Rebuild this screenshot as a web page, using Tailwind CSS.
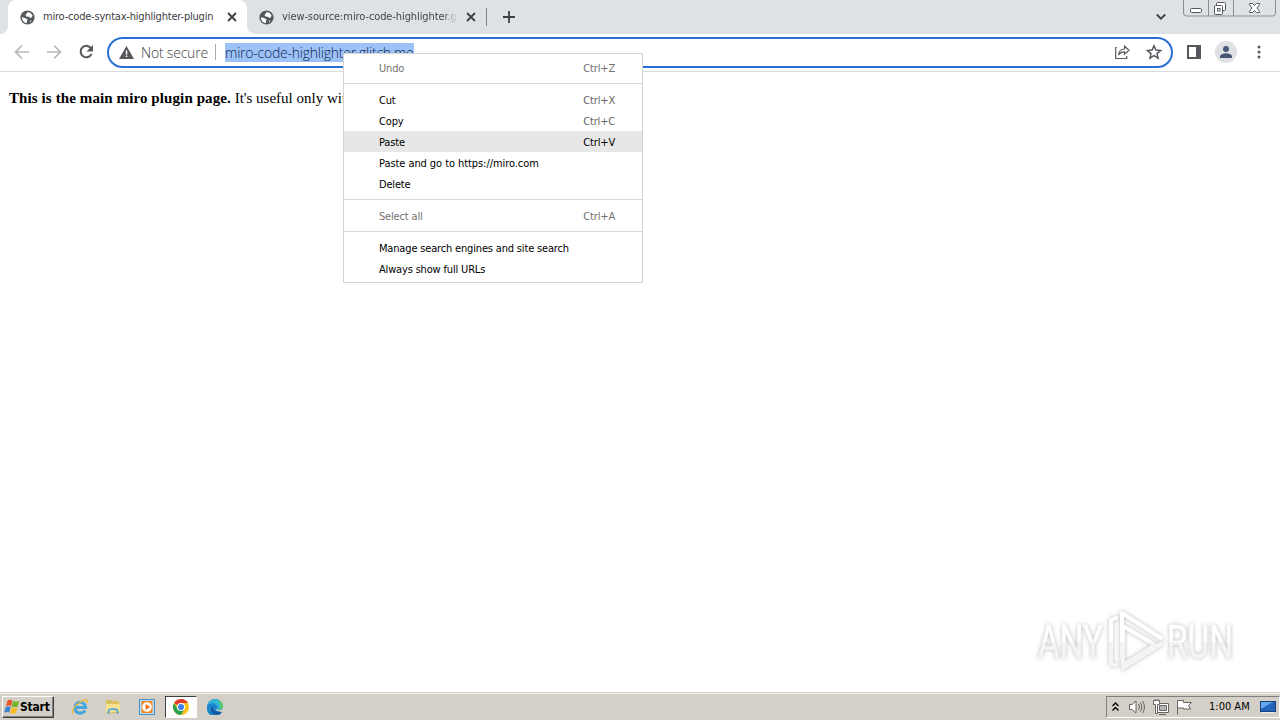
<!DOCTYPE html>
<html lang="en">
<head>
  <meta charset="UTF-8" />
  <meta name="viewport" content="width=device-width, initial-scale=1" />
  <title>miro-code-syntax-highlighter-plugin</title>
  <script src="https://cdn.jsdelivr.net/npm/@tailwindcss/browser@4"></script>
</head>
<body class="relative flex h-[720px] w-[1280px] flex-col overflow-hidden bg-white font-['DejaVu_Sans_Condensed','DejaVu_Sans',sans-serif] text-black">
  <svg class="hidden">
    <symbol id="globe" viewBox="0 0 24 24">
      <circle cx="12" cy="12" r="10" fill="#54585d" />
      <path fill="#fff" d="M4.200 11.500l4.300 1.300c1 .3 1.200 1 2.500 1.400 1.500.4 1.300 1.500.3 2.500l-.3 3c-4 0-7-4-6.800-8.200zM10 7.500l2-3c4-.2 6 2 7.300 5l-2 3c-2 .3-2.300-.5-3.300-1.500l-3.500-.5c-1.300-.8-1.500-2-.5-3zM15 17l3-.8-2 2.500z" />
    </symbol>
  </svg>

  <!-- Tab strip -->
  <header class="flex h-[34px] shrink-0 bg-[#dee1e6]">
    <div class="flex w-2 items-end bg-white"><div class="h-full w-2 rounded-br-lg bg-[#dee1e6]"></div></div>
    <div class="bg-[#dee1e6]">
      <div class="flex h-full w-[239px] items-center rounded-t-lg bg-white pl-[11px]">
        <svg class="h-[17px] w-[17px]"><use href="#globe" /></svg>
        <span class="ml-[7px] w-[180px] text-[11px] tracking-[-0.2px] whitespace-nowrap text-[#3c4043]">miro-code-syntax-highlighter-plugin</span>
        <svg class="ml-1 h-2.5 w-2.5" viewBox="0 0 10 10" stroke="#3c4043" stroke-width="1.800"><path d="M1 1l8 8M9 1l-8 8" /></svg>
      </div>
    </div>
    <div class="w-[239px] bg-white">
      <div class="flex h-full items-center rounded-bl-lg bg-[#dee1e6] pl-[11px]">
        <svg class="h-[17px] w-[17px]"><use href="#globe" /></svg>
        <span class="ml-[7px] w-[175px] overflow-hidden bg-linear-to-r from-[#3c4043] from-92% to-transparent bg-clip-text text-[11px] tracking-[-0.1px] whitespace-nowrap text-transparent">view-source:miro-code-highlighter.gl</span>
        <svg class="ml-[9px] h-2.5 w-2.5" viewBox="0 0 10 10" stroke="#3c4043" stroke-width="1.800"><path d="M1 1l8 8M9 1l-8 8" /></svg>
      </div>
    </div>
    <div class="mt-2 h-[18px] w-px bg-[#80858b]"></div>
    <svg class="mt-[11px] ml-4 h-3 w-3" viewBox="0 0 12 12" stroke="#3c4043" stroke-width="1.800"><path d="M6 0v12M0 6h12" /></svg>
    <svg class="mt-[13px] ml-auto h-2 w-[10px]" viewBox="0 0 10 8" fill="none" stroke="#3c4043" stroke-width="1.800"><path d="M.8 1.500L5 5.700l4.200-4.200" /></svg>
    <svg class="mr-[3px] ml-4 h-[18px] w-[95px]" viewBox="0 0 95 18" fill="none" stroke="#8b8f95">
      <path d="M1.500 0v13q0 3 3 3h86q3 0 3-3V0M26.500 0v16M51.500 0v16" />
      <g stroke="#55595e" fill="#fff"><rect x="8.500" y="8.500" width="11" height="4" rx="1" /><rect x="34.500" y="2.500" width="9" height="8" rx="1" /><rect x="32.500" y="5.500" width="8" height="9" rx="1" /><rect x="35.500" y="8.500" width="2.500" height="2.500" /></g>
      <path stroke="#55595e" fill="#fff" d="M67.500 3.500h3l2 2 2-2h3v1L75 8l2.500 3.500v1h-3l-2-2-2 2h-3v-1L70 8l-2.500-3.500z" />
    </svg>
  </header>

  <!-- Toolbar -->
  <nav class="flex h-[38px] shrink-0 items-center border-b border-[#d9dbde] pb-px">
    <svg class="ml-[14px] h-4 w-[81px]" viewBox="0 0 81 16" fill="none" stroke="#b5b7b9" stroke-width="1.700">
      <path d="M15 8H2M8 1.500L1.500 8 8 14.500M33 8h13M40 1.500L46.500 8 40 14.500" />
      <path stroke="#54585d" stroke-width="2" d="M77.300 4.700A5.700 5.700 0 1 0 77.600 9.800" /><path fill="#54585d" stroke="none" d="M79 1v6.500h-6.500z" />
    </svg>
    <div class="ml-3 flex h-[31px] w-[1066px] items-center rounded-full border-2 border-[#2a6fd6] pl-2.5 font-['Open_Sans','Noto_Sans',sans-serif] font-light">
      <svg class="h-[13px] w-[15px]" viewBox="0 0 15 13"><path fill="#54585d" d="M7.500 0L15 13H0z" /><path fill="#fff" d="M6.800 4.500h1.500v4H6.800zM6.800 9.600h1.500v1.500H6.800z" /></svg>
      <span class="ml-[7px] w-[74px] text-[14px] tracking-[-0.2px] whitespace-nowrap text-[#3c4043]">Not secure</span>
      <span class="h-4 w-px bg-[#a5a8ac]"></span>
      <span class="ml-[9px] h-[19px] w-[189px] bg-[#9dc2f8] text-[14px] leading-[19px] tracking-[-0.23px] whitespace-nowrap text-[#10284d]">miro-code-highlighter.glitch.me</span>
      <svg class="mr-[7px] ml-auto h-4 w-[50px]" viewBox="0 0 50 16" fill="none" stroke="#54585d" stroke-width="1.200">
        <path d="M2.700 3.500H1.700v11h11V12M4.500 11c.5-4.500 3-6 6-6V2.200l4.500 4-4.500 4V7.800c-2.500 0-4.500.9-6 3.200z" />
        <path stroke-width="1.500" d="M40 1.800l1.900 4.300 4.700.4-3.600 3.100 1.100 4.600-4.100-2.500-4.100 2.500L37 9.600l-3.600-3.100 4.700-.4z" />
      </svg>
    </div>
    <svg class="ml-[14px] h-[14px] w-[14px]" viewBox="0 0 14 14"><path fill="#54585d" fill-rule="evenodd" d="M0 0h14v14H0zM2 2v10h7V2z" /></svg>
    <svg class="ml-[14px] h-[22px] w-[22px]" viewBox="0 0 22 22"><circle cx="11" cy="11" r="11" fill="#dfe1e5" /><g fill="#4a5878"><circle cx="11" cy="8" r="3" /><path d="M5 17v-1.800c0-2 4-3 6-3s6 1 6 3V17z" /></g></svg>
    <svg class="ml-5 h-[14px] w-1" viewBox="0 0 4 14" fill="#54585d"><circle cx="2" cy="2" r="1.500" /><circle cx="2" cy="7" r="1.500" /><circle cx="2" cy="12" r="1.500" /></svg>
  </nav>

  <!-- Page -->
  <main class="flex-1 overflow-hidden pt-[17px] pl-[9px] font-['Liberation_Serif',serif] text-[15px] leading-[19px] whitespace-nowrap">
    <p><b class="tracking-[0.1px]">This is the main miro plugin page.</b> It's useful only with</p>
  </main>

  <!-- Watermark -->
  <div class="absolute top-[608px] left-[1036px] drop-shadow-[0_0_2px_#bbbbbb]">
    <svg class="h-[66px] w-[200px] overflow-visible" viewBox="0 0 200 66">
      <defs>
        <linearGradient id="mark" gradientUnits="userSpaceOnUse" x1="0" y1="12" x2="0" y2="52"><stop offset=".55" stop-color="#fff" /><stop offset=".56" stop-color="#f4f4f4" /></linearGradient>
      </defs>
      <g fill="url(#mark)" stroke="url(#mark)" stroke-width=".6" font-family="Roboto, sans-serif" font-size="46">
        <text x="2" y="50" textLength="65" lengthAdjust="spacingAndGlyphs">ANY</text>
        <text x="131" y="50" textLength="66" lengthAdjust="spacingAndGlyphs">RUN</text>
      </g>
      <g fill="none" stroke="url(#mark)" stroke-width="4" stroke-linejoin="round" stroke-linecap="round">
        <path d="M80 10l-5 2v44l5 1M86 50V5l39 25M87 18l32 19-32 20V18M125 36L87 60" />
      </g>
    </svg>
  </div>

  <!-- Taskbar -->
  <footer class="flex h-7 shrink-0 items-center border-t border-[#d4d0c8] bg-[#d4d0c8] pt-px text-[11px] shadow-[inset_0_1px_0_#f4f3f0]">
    <div class="ml-[2px] flex h-[22px] w-[52px] items-center border border-t-white border-r-[#404040] border-b-[#404040] border-l-white pl-px shadow-[inset_-1px_-1px_0_#808080]">
      <svg class="h-4 w-4" viewBox="0 0 16 16">
        <path fill="#e5572d" d="M3.500 1.500q2.500-1.500 5 0L7 7.200q-2.500-1.200-5 0z" /><path fill="#75b32c" d="M9.200 2q3 1.200 6 0L13.700 7.500q-3 1.200-6 0z" /><path fill="#3d83d3" d="M1.700 8q2.500-1.200 5 0l-1.500 5.500q-2.500-1.200-5 0z" /><path fill="#f8bd26" d="M7.500 8.300q3 1.200 6 0L12 14q-3 1.200-6 0z" />
      </svg>
      <b class="text-[12px] tracking-[-0.2px]">Start</b>
    </div>
    <svg class="ml-[17px] h-[18px] w-[18px]" viewBox="0 0 18 18" fill="none">
      <path stroke="#42a7df" stroke-width="3" d="M4 9.500h10.500C14 2.500 4 2.500 4 10c0 6 7.500 6.500 10 2.500" /><path stroke="#e8b83c" stroke-width="1.300" d="M2 16C-.5 13 6 4 14 2c3-.5 3 1 2 3" />
    </svg>
    <svg class="ml-4 h-4 w-4" viewBox="0 0 16 16">
      <path fill="#e3c159" d="M1 1h5l1 1h7v12H1z" /><path fill="#f8e28e" d="M1 5h14v8H1z" /><path fill="none" stroke="#62add8" stroke-width="2" d="M3.500 15v-3q0-2 4.500-2t4.500 2v3" /><path fill="#8ecb75" d="M3 2h3v1H3z" />
    </svg>
    <svg class="ml-[18px] h-4 w-4" viewBox="0 0 16 16">
      <rect x=".5" y=".5" width="15" height="15" fill="#b7dcf5" stroke="#4b91c9" /><rect x="2.500" y="2" width="11" height="12" fill="#f4871e" /><circle cx="8" cy="8" r="4.800" fill="#fff" /><path fill="#ef7414" d="M6.500 5l5 3-5 3z" />
    </svg>
    <div class="ml-[10px] flex h-[22px] w-[32px] items-center justify-center border border-t-[#404040] border-r-white border-b-white border-l-[#404040] bg-white">
      <svg class="h-4 w-4" viewBox="0 0 16 16">
        <circle cx="8" cy="8" r="8" fill="#fbc116" /><path fill="#e33b2e" d="M8 8L1.100 4A8 8 0 0 1 15 4H8z" /><path fill="#2aa24c" d="M1.100 4A8 8 0 0 0 8 16l3.500-6L8 8 4.500 10z" /><circle cx="8" cy="8" r="4" fill="#fff" /><circle cx="8" cy="8" r="3" fill="#3b7ded" />
      </svg>
    </div>
    <svg class="ml-[10px] h-4 w-4" viewBox="0 0 16 16">
      <path fill="#1c83cd" d="M0 8a8 8 0 0 1 16 0c0 3-4 4-6 2-2 0-2 2 5 3A8 8 0 0 1 0 8z" /><path fill="#33b5d6" d="M.5 6C2 1 6-.5 10 .5c6 2 6 6 6 7.500 0 3-4 4-6 2 2-4-4-8-9.500-4z" /><path fill="#5bc96b" d="M11 .8c4 1.500 5 4.500 5 7.200 0 2-2 3-4 2.700C14 8 13 4 11 .8z" /><path fill="#14549a" d="M6.500 7c-2 4 2 7 8 6C11 18 3 15 4 9.500q1-2 2.500-2.500z" />
    </svg>

    <div class="ml-auto flex h-[22px] w-[174px] items-center border border-t-[#808080] border-r-white border-b-white border-l-[#808080]">
      <svg class="ml-[5px] h-2.5 w-[7px]" viewBox="0 0 7 10" fill="none" stroke="#000" stroke-width="1.300"><path d="M.5 4l3-3 3 3M.5 8.500l3-3 3 3" /></svg>
      <svg class="ml-[10px] h-4 w-[66px]" viewBox="0 0 66 16" fill="#fff" stroke="#66645f">
        <path d="M.5 5.500H3l4-3.500v12l-4-3.500H.5z" /><path fill="none" d="M9.500 5q2 3 0 6M11.500 3.500q3 4.500 0 9M13.500 2q4 6 0 12" />
        <path d="M27.500 4.500h12v9h-12zM30 15.500h7" /><path fill="#b5b5b5" d="M30.500 6.500h7v5h-7z" /><path d="M24.500 1.500h6v4h-2v9h-2v-9h-2zM26 0v2M29 0v2" />
        <path d="M48.500 15.500V1.500h6v2h8l-3 3 2 3.500h-7V9h-6" />
      </svg>
      <span class="ml-[14px] whitespace-nowrap">1:00 AM</span>
      <svg class="mr-[3px] ml-auto h-[14px] w-4" viewBox="0 0 16 14"><rect x=".5" y="1.500" width="15" height="10" fill="#2464bc" stroke="#17427f" /><path fill="#65a5eb" d="M1 2h12L1 9z" /><path fill="#eee" d="M2 12h12v1H2z" /></svg>
    </div>
  </footer>

  <!-- Context menu -->
  <div class="absolute top-[53px] left-[343px] w-[300px] rounded-[1px] border border-[#d2d2d2] bg-white py-[3px] text-[11px] leading-[23px] tracking-[-0.17px]">
    <div class="flex h-[21px] justify-between pr-[27px] pl-[35px] text-[#727272]"><span>Undo</span><span>Ctrl+Z</span></div>
    <hr class="my-[5px] border-[#d7d7d7]" />
    <div class="flex h-[21px] justify-between pr-[27px] pl-[35px]"><span>Cut</span><span class="text-[#666666]">Ctrl+X</span></div>
    <div class="flex h-[21px] justify-between pr-[27px] pl-[35px]"><span>Copy</span><span class="text-[#666666]">Ctrl+C</span></div>
    <div class="flex h-[21px] justify-between bg-[#e7e7e7] pr-[27px] pl-[35px]"><span>Paste</span><span>Ctrl+V</span></div>
    <div class="flex h-[21px] justify-between pr-[27px] pl-[35px]"><span class="tracking-[-0.07px]">Paste and go to https://miro.com</span></div>
    <div class="flex h-[21px] justify-between pr-[27px] pl-[35px]"><span>Delete</span></div>
    <hr class="my-[5px] border-[#d7d7d7]" />
    <div class="flex h-[21px] justify-between pr-[27px] pl-[35px] text-[#727272]"><span>Select all</span><span>Ctrl+A</span></div>
    <hr class="my-[5px] border-[#d7d7d7]" />
    <div class="flex h-[21px] justify-between pr-[27px] pl-[35px]"><span>Manage search engines and site search</span></div>
    <div class="flex h-[21px] justify-between pr-[27px] pl-[35px]"><span>Always show full URLs</span></div>
  </div>
</body>
</html>
